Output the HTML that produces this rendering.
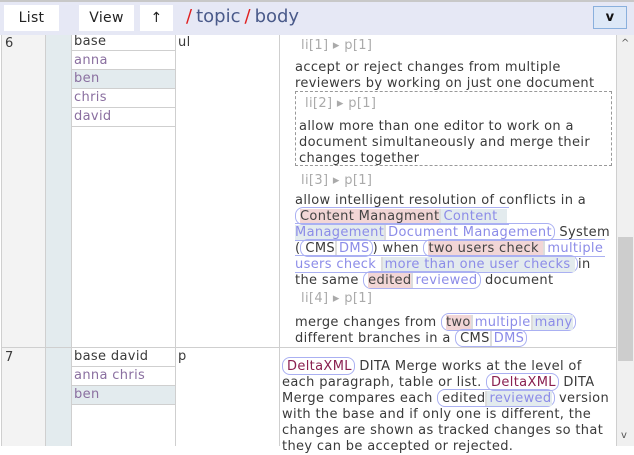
<!DOCTYPE html>
<html><head><meta charset="utf-8"><style>
*{margin:0;padding:0;box-sizing:border-box}
body{width:634px;height:446px;overflow:hidden;background:#fff;font-family:"DejaVu Sans","Liberation Sans",sans-serif;font-size:13px;letter-spacing:0.35px;color:#3a3a3a;position:relative}
.a{position:absolute}
.l{position:absolute;white-space:nowrap;line-height:16px;height:16px}
.hdr{left:0;top:0;width:634px;height:35px;background:#e6e8f5;border-top:2px solid #c8c8c8}
.btn{position:absolute;top:5px;height:26px;background:#fff;font-size:14px;letter-spacing:0.3px;color:#222;text-align:center;line-height:26px}
.lbl{color:#aaa}
.c{border:1px solid #aab0f2;border-radius:8px;padding:1px 2px 0 4px}
.d{background:#f2d6d6;color:#444}
.ad{color:#8c8ce8}
.ab{color:#8c8ce8;background:#e3ebee}
.s{border-left:2px solid #ddd;padding-left:2px}
.pu{color:#8a6fa0}
.mr{color:#8a2050}
.vl{position:absolute;width:1px;background:#cfcfcf}
.hl{position:absolute;height:1px;background:#cfcfcf}
</style></head><body>
<div class="a hdr"></div>
<div class="btn" style="left:4px;width:55px">List</div>
<div class="btn" style="left:79px;width:55px">View</div>
<div class="btn" style="left:140px;width:33px">↑</div>
<div class="a" style="left:186px;top:5px;font-size:18px;letter-spacing:0;line-height:24px;color:#4a5a8a;white-space:nowrap"><span style="color:#e02020;margin-right:4px">/</span>topic<span style="color:#e02020;margin:0 4px">/</span>body</div>
<div class="a" style="left:593px;top:6px;width:34px;height:23px;background:#dde8f7;border:1px solid #8ab0dd;text-align:center;font-weight:bold;font-size:13px;line-height:21px;color:#111">v</div>

<div class="a" style="left:1px;top:35px;width:44px;height:411px;background:#f3f3f3"></div>
<div class="a" style="left:45px;top:35px;width:26px;height:411px;background:#e3ebee"></div>
<div class="a" style="left:72px;top:69px;width:103px;height:19px;background:#e3ebee"></div>
<div class="a" style="left:72px;top:385px;width:103px;height:19px;background:#e3ebee"></div>
<div class="vl" style="left:1px;top:35px;height:411px"></div>
<div class="vl" style="left:45px;top:35px;height:411px"></div>
<div class="vl" style="left:71px;top:35px;height:411px"></div>
<div class="vl" style="left:175px;top:35px;height:411px"></div>
<div class="vl" style="left:279px;top:35px;height:411px"></div>
<div class="vl" style="left:616px;top:35px;height:411px"></div>
<div class="hl" style="left:1px;top:347px;width:616px"></div>
<div class="hl" style="left:72px;top:50px;width:103px"></div>
<div class="hl" style="left:72px;top:69px;width:103px"></div>
<div class="hl" style="left:72px;top:88px;width:103px"></div>
<div class="hl" style="left:72px;top:107px;width:103px"></div>
<div class="hl" style="left:72px;top:126px;width:103px"></div>
<div class="hl" style="left:72px;top:366px;width:103px"></div>
<div class="hl" style="left:72px;top:385px;width:103px"></div>
<div class="hl" style="left:72px;top:404px;width:103px"></div>

<div class="a" style="left:617px;top:35px;width:17px;height:411px;background:#f0f0f0"></div>
<div class="a" style="left:618px;top:237px;width:15px;height:124px;background:#cdcdcd"></div>
<div class="a" style="left:621px;top:38px;font-size:10px;color:#555">^</div>
<div class="a" style="left:621px;top:430px;font-size:10px;color:#555">v</div>

<div class="l" style="left:5px;top:36px">6</div>
<div class="l" style="left:74px;top:34px">base</div>
<div class="l pu" style="left:74px;top:53px">anna</div>
<div class="l pu" style="left:74px;top:71px">ben</div>
<div class="l pu" style="left:74px;top:90px">chris</div>
<div class="l pu" style="left:74px;top:109px">david</div>
<div class="l" style="left:178px;top:35px">ul</div>
<div class="l" style="left:5px;top:350px">7</div>
<div class="l" style="left:74px;top:349px">base david</div>
<div class="l pu" style="left:74px;top:368px">anna chris</div>
<div class="l pu" style="left:74px;top:387px">ben</div>
<div class="l" style="left:178px;top:349px">p</div>

<div class="l lbl" style="left:301px;top:38px">li[1] ▸ p[1]</div>
<div class="l" style="left:295px;top:60px">accept or reject changes from multiple</div>
<div class="l" style="left:295px;top:76px">reviewers by working on just one document</div>
<div class="a" style="left:295px;top:91px;width:317px;height:75px;border:1px dashed #999"></div>
<div class="l lbl" style="left:305px;top:96px">li[2] ▸ p[1]</div>
<div class="l" style="left:299px;top:119px">allow more than one editor to work on a</div>
<div class="l" style="left:299px;top:135px">document simultaneously and merge their</div>
<div class="l" style="left:299px;top:151px">changes together</div>
<div class="l lbl" style="left:301px;top:173px">li[3] ▸ p[1]</div>
<div class="l" style="left:295px;top:193px">allow intelligent resolution of conflicts in a</div>
<div class="l" style="left:295px;top:209px"><span class="c" style="border-right:none;border-radius:8px 0 0 8px"><span class="d">Content Managment</span><span class="ab s">Content&nbsp;&nbsp;</span></span></div>
<div class="l" style="left:295px;top:225px"><span class="c" style="border-left:none;border-radius:0 8px 8px 0;padding-left:0"><span class="ab">Management</span><span class="ad s">Document Management</span></span> System</div>
<div class="l" style="left:295px;top:241px">(<span class="c"><span>CMS</span><span class="ad s">DMS</span></span>) when <span class="c" style="border-right:none;border-radius:8px 0 0 8px"><span class="d">two users check </span><span class="ad s">multiple</span></span></div>
<div class="l" style="left:295px;top:257px"><span class="c" style="border-left:none;border-radius:0 8px 8px 0;padding-left:0"><span class="ad">users check </span><span class="ab s">more than one user checks </span></span>in</div>
<div class="l" style="left:295px;top:273px">the same <span class="c"><span class="d">edited</span><span class="ad s">reviewed</span></span> document</div>
<div class="l lbl" style="left:301px;top:291px">li[4] ▸ p[1]</div>
<div class="l" style="left:295px;top:315px">merge changes from <span class="c"><span class="d">two</span><span class="ad s">multiple</span><span class="ab s">many</span></span></div>
<div class="l" style="left:295px;top:331px">different branches in a <span class="c"><span>CMS</span><span class="ad s">DMS</span></span></div>

<div class="l" style="left:282px;top:359px"><span class="c mr">DeltaXML</span> DITA Merge works at the level of</div>
<div class="l" style="left:282px;top:375px">each paragraph, table or list. <span class="c mr">DeltaXML</span> DITA</div>
<div class="l" style="left:282px;top:391px">Merge compares each <span class="c"><span>edited</span><span class="ab s">reviewed</span></span> version</div>
<div class="l" style="left:282px;top:407px">with the base and if only one is different, the</div>
<div class="l" style="left:282px;top:423px">changes are shown as tracked changes so that</div>
<div class="l" style="left:282px;top:439px">they can be accepted or rejected.</div>
</body></html>
